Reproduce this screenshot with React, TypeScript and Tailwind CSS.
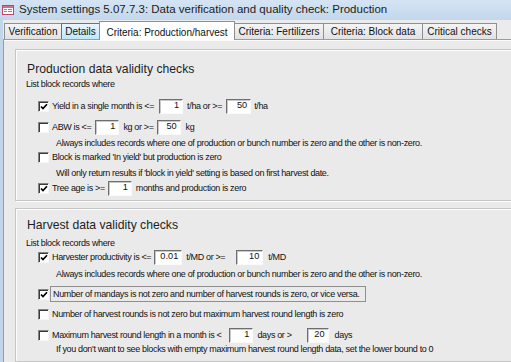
import React from "react";

const narrow = "font-['Liberation_Sans',Arial,sans-serif] text-[9px] tracking-[-0.35px] leading-none text-[#111]";

function Check({ checked = false }: { checked?: boolean }) {
  return (
    <span className="flex h-[11px] w-[11px] shrink-0 items-center justify-center border border-b-[#f6f6f6] border-l-[#858585] border-r-[#f6f6f6] border-t-[#858585] bg-white shadow-[inset_1px_1px_0_#3a3a3a]">
      {checked && (
        <svg width="8" height="8" viewBox="0 0 8 8" className="ml-[1px] mt-[1px] block">
          <path d="M1 3.5 L3 5.6 L7 1.2" stroke="#000" strokeWidth="1.7" fill="none" />
        </svg>
      )}
    </span>
  );
}

function Field({ value, className }: { value: string; className: string }) {
  return (
    <span
      className={`flex h-[15px] shrink-0 items-center justify-end border border-b-[#fafafa] border-l-[#6e6e6e] border-r-[#fafafa] border-t-[#6e6e6e] bg-white pr-[3px] text-[9.2px] tracking-normal shadow-[inset_1px_1px_0_#c9c9c9] ${className}`}
    >
      {value}
    </span>
  );
}

function Tab({ label, className }: { label: string; className: string }) {
  return (
    <div
      className={`-ml-[1px] flex h-[16px] items-center justify-center border border-b-0 border-[#8d8f95] bg-gradient-to-b from-[#f4f4f4] to-[#e2e2e2] ${className}`}
    >
      {label}
    </div>
  );
}

export default function App() {
  return (
    <div className="flex h-[362px] w-[511px] flex-col overflow-hidden bg-[#c3d5e8]">
      {/* Title bar */}
      <div className="flex h-[20px] shrink-0 items-center bg-gradient-to-b from-[#d5e4f3] to-[#c2d7ec] pl-[2px] font-['Liberation_Sans',Arial,sans-serif] text-[11.5px] text-[#1b1b1b]">
        <svg width="12" height="10" viewBox="0 0 12 10" className="block">
          <rect x="0.5" y="0.5" width="11" height="9" fill="#fff" stroke="#c0476b" />
          <rect x="1" y="1" width="10" height="2" fill="#d86a86" />
          <rect x="2" y="4" width="3" height="1" fill="#7a8aa0" />
          <rect x="6" y="4" width="4" height="1" fill="#7a8aa0" />
          <rect x="2" y="6" width="3" height="1" fill="#7a8aa0" />
          <rect x="6" y="6" width="4" height="1" fill="#7a8aa0" />
        </svg>
        <span className="ml-[5px]">System settings 5.07.7.3: Data verification and quality check: Production</span>
      </div>

      <div className="flex min-h-0 flex-1 flex-col bg-[#ebebeb] pl-[3px] shadow-[inset_3px_0_0_#c3d5e8]">
        {/* Tab strip */}
        <div className="relative flex h-[19px] shrink-0 items-end pl-[1px] font-['Liberation_Sans',Arial,sans-serif] text-[10px] text-[#111]">
          <Tab label="Verification" className="ml-0 w-[58px]" />
          <div className="-ml-[1px] flex h-[16px] w-[39px] items-center justify-center border border-b-0 border-[#3c7fb1] bg-gradient-to-b from-[#eaf6fd] to-[#bee6fd]">
            Details
          </div>
          <div className="relative z-10 -mb-[1px] -ml-[1px] flex h-[19px] w-[136px] items-start justify-center border border-b-0 border-[#8d8f95] bg-white pt-[3px]">
            Criteria: Production/harvest
          </div>
          <Tab label="Criteria: Fertilizers" className="w-[90px]" />
          <Tab label="Criteria: Block data" className="w-[100px]" />
          <Tab label="Critical checks" className="w-[75px]" />
        </div>

        {/* Panel */}
        <div className={`flex min-h-0 flex-1 flex-col border-l border-t border-[#9a9ca2] bg-[#eaeaea] pl-[11px] shadow-[inset_0_1px_0_#fbfbfb] ${narrow}`}>
          {/* Group 1 */}
          <div className="mt-[9px] flex w-[520px] shrink-0 flex-col border border-[#c6c6c6] pb-[4px] shadow-[inset_1px_1px_0_#fdfdfd,1px_1px_0_#fdfdfd]">
            <div className="mt-[11px] flex h-[16px] items-center pl-[11px] font-['Liberation_Sans',Arial,sans-serif] text-[12.2px] tracking-normal text-[#1e1e1e]">
              Production data validity checks
            </div>
            <div className="mt-[1px] flex h-[12px] items-center pl-[10px]">List block records where</div>

            <div className="mt-[8px] flex h-[16px] items-center pl-[22px]">
              <Check checked />
              <span className="ml-[3px]">Yield in a single month is &lt;=</span>
              <Field value="1" className="ml-[5px] w-[24px]" />
              <span className="ml-[4px]">t/ha or &gt;=</span>
              <Field value="50" className="ml-[4px] w-[25px]" />
              <span className="ml-[3px]">t/ha</span>
            </div>

            <div className="mt-[5px] flex h-[16px] items-center pl-[22px]">
              <Check />
              <span className="ml-[3px]">ABW is &lt;=</span>
              <Field value="1" className="ml-[4px] w-[24px]" />
              <span className="ml-[4px]">kg or &gt;=</span>
              <Field value="50" className="ml-[3px] w-[24px]" />
              <span className="ml-[5px]">kg</span>
            </div>

            <div className="mt-[2px] flex h-[12px] items-center pl-[40px]">
              Always includes records where one of production or bunch number is zero and the other is non-zero.
            </div>

            <div className="mt-[1px] flex h-[14px] items-center pl-[22px]">
              <Check />
              <span className="ml-[3px]">Block is marked 'In yield' but production is zero</span>
            </div>

            <div className="mt-[3px] flex h-[12px] items-center pl-[40px]">
              Will only return results if 'block in yield' setting is based on first harvest date.
            </div>

            <div className="mt-[1px] flex h-[16px] items-center pl-[22px]">
              <Check checked />
              <span className="ml-[3px]">Tree age is &gt;=</span>
              <Field value="1" className="ml-[3px] w-[24px]" />
              <span className="ml-[4px]">months and production is zero</span>
            </div>
          </div>

          {/* Group 2 */}
          <div className="mt-[7px] flex w-[520px] shrink-0 flex-col border border-[#c6c6c6] pb-[6px] shadow-[inset_1px_1px_0_#fdfdfd,1px_1px_0_#fdfdfd]">
            <div className="mt-[8px] flex h-[16px] items-center pl-[11px] font-['Liberation_Sans',Arial,sans-serif] text-[12.2px] tracking-normal text-[#1e1e1e]">
              Harvest data validity checks
            </div>
            <div className="mt-[4px] flex h-[12px] items-center pl-[10px]">List block records where</div>

            <div className="flex h-[16px] items-center pl-[22px]">
              <Check checked />
              <span className="ml-[3px]">Harvester productivity is &lt;=</span>
              <Field value="0.01" className="ml-[3px] w-[28px]" />
              <span className="ml-[4px]">t/MD or &gt;=</span>
              <Field value="10" className="ml-[11px] w-[27px]" />
              <span className="ml-[5px]">t/MD</span>
            </div>

            <div className="mt-[3px] flex h-[12px] items-center pl-[40px]">
              Always includes records where one of production or bunch number is zero and the other is non-zero.
            </div>

            <div className="mt-[6px] flex h-[16px] items-center pl-[22px]">
              <Check checked />
              <span className="ml-[1px] flex h-[16px] items-center border border-[#8f8f8f] pl-[2px] pr-[6px]">
                Number of mandays is not zero and number of harvest rounds is zero, or vice versa.
              </span>
            </div>

            <div className="mt-[5px] flex h-[14px] items-center pl-[22px]">
              <Check />
              <span className="ml-[3px]">Number of harvest rounds is not zero but maximum harvest round length is zero</span>
            </div>

            <div className="mt-[6px] flex h-[16px] items-center pl-[22px]">
              <Check />
              <span className="ml-[3px]">Maximum harvest round length in a month is &lt;</span>
              <Field value="1" className="ml-[8px] w-[24px]" />
              <span className="ml-[4px]">days or &gt;</span>
              <Field value="20" className="ml-[15px] w-[22px]" />
              <span className="ml-[6px]">days</span>
            </div>

            <div className="flex h-[12px] items-center pl-[40px]">
              If you don't want to see blocks with empty maximum harvest round length data, set the lower bound to 0
            </div>
          </div>
        </div>
      </div>
    </div>
  );
}
